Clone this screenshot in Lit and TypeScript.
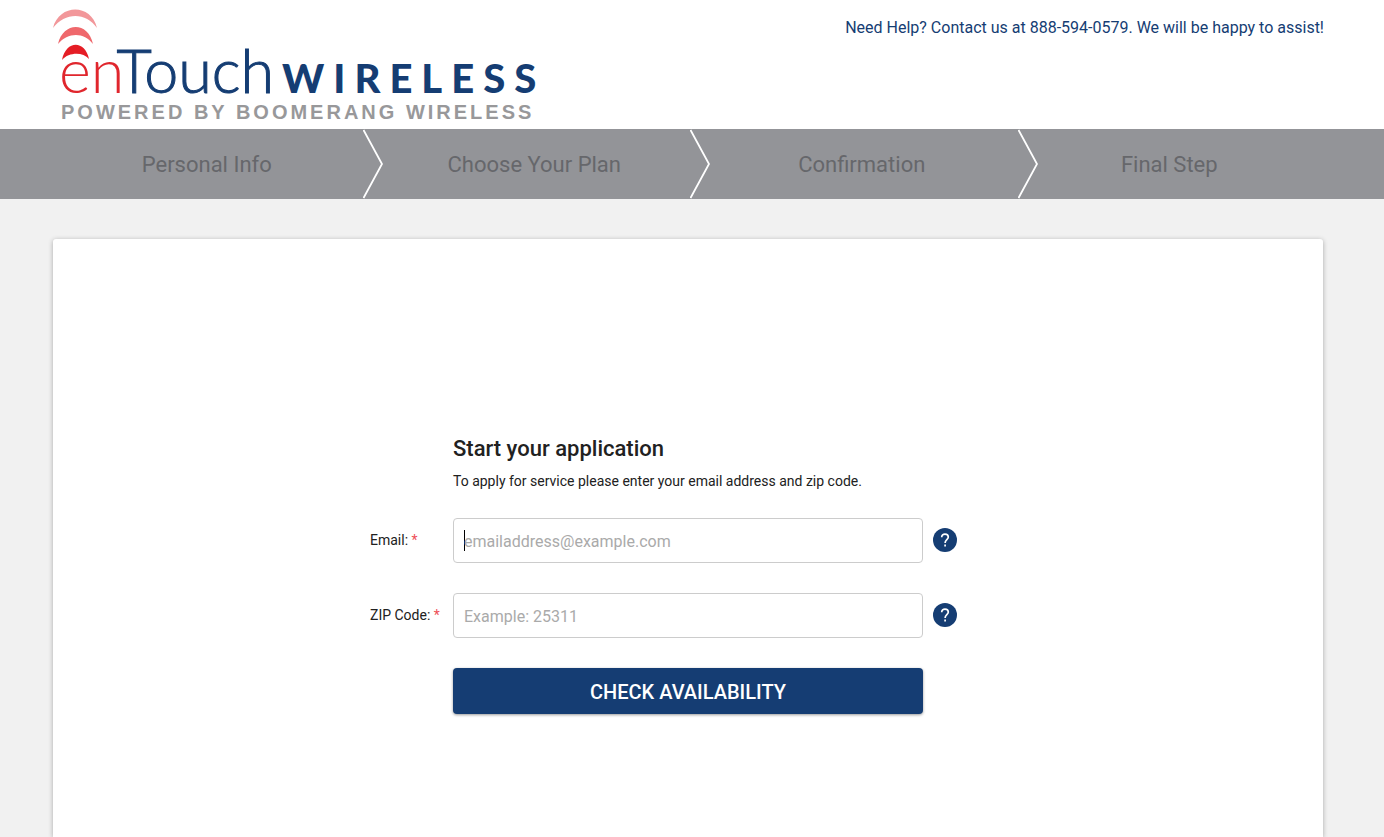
import { LitElement, html, css, svg } from "lit";
import { customElement } from "lit/decorators.js";

const STEPS = ["Personal Info", "Choose Your Plan", "Confirmation", "Final Step"];

@customElement("brand-logo")
class BrandLogo extends LitElement {
  static styles = css`
    :host { display: block; width: 510px; max-width: 100%; }
    svg { display: block; width: 100%; }
    .touch { font: 300 61px Lato, sans-serif; }
    .strong { stroke: #153d73; stroke-width: 1; }
    .wireless { font: 900 40px Lato, sans-serif; letter-spacing: 9px; }
    .powered { font: bold 20px "Liberation Sans", sans-serif; letter-spacing: 3px; }
  `;

  render() {
    return html`
      <svg viewBox="0 0 510 114" role="img" aria-label="enTouch Wireless">
        ${svg`
          <path d="M0 20 C6 -4 38 -5 44 20 C33 4 12 4 0 20Z" fill="#f2979a" />
          <path d="M5 36 C10 14 35 13 40 36 C31 24 15 24 5 36Z" fill="#ef686c" />
          <path d="M9 52 C13 32 32 32 36 51 C30 44 16 44 9 52Z" fill="#e51d25" />
          <text class="touch" x="6" y="85" fill="#e0262d">en<tspan class="strong" fill="#153d73">Touch</tspan></text>
          <text class="wireless" x="229" y="85" fill="#153d73">WIRELESS</text>
          <text class="powered" x="8" y="111" fill="#98989a">POWERED BY BOOMERANG WIRELESS</text>
        `}
      </svg>
    `;
  }
}

@customElement("app-root")
class AppRoot extends LitElement {
  static styles = css`
    :host {
      display: flex;
      flex-direction: column;
      min-height: 100vh;
      background: #f1f1f1;
      color: #212121;
      font: 14px/20px Roboto, sans-serif;
    }
    * { box-sizing: border-box; }
    .top {
      display: flex;
      justify-content: space-between;
      align-items: flex-start;
      height: 129px;
      padding: 8px 60px 0 53px;
      background: #fff;
    }
    .help-line { margin: 8px 0 0; font-size: 16px; line-height: 24px; color: #153d73; }
    .steps { padding: 0 61px 0 53px; background: #939498; }
    .steps ol { display: flex; margin: 0; padding: 0; list-style: none; }
    .step {
      display: flex;
      flex: 1 1 60px;
      align-items: center;
      height: 70px;
      font-size: 22px;
      line-height: 28px;
      color: #66676b;
    }
    .step:last-child { flex-basis: 20px; padding-right: 20px; }
    .step-name { flex: 1; padding-top: 2px; text-align: center; }
    .chevron { flex: none; width: 20px; height: 70px; margin-right: -2px; margin-left: 2px; }
    .main { display: flex; flex: 1; padding: 40px 61px 0 53px; }
    .card {
      flex: 1;
      padding-top: 196px;
      background: #fff;
      border-radius: 3px 3px 0 0;
      box-shadow: 0 1px 5px rgba(0, 0, 0, 0.3);
    }
    form {
      display: grid;
      grid-template-columns: 73px minmax(0, 470px) 73px;
      column-gap: 10px;
      justify-content: center;
      align-items: center;
    }
    .intro { grid-column: 2 / 4; margin-bottom: 27px; }
    h1 { margin: 0; font-size: 22px; line-height: 28px; font-weight: 500; }
    .intro p { margin: 8px 0 0; }
    label { white-space: nowrap; }
    .star { color: #ee4f57; }
    .field {
      width: 100%;
      height: 45px;
      margin-bottom: 30px;
      padding: 2px 10px 0;
      border: 1px solid #ccc;
      border-radius: 4px;
      background: #fff;
      color: #212121;
      font: 16px/20px Roboto, sans-serif;
      outline: none;
    }
    .field::placeholder { color: #aaa; opacity: 1; }
    .active:placeholder-shown {
      caret-color: transparent;
      background: linear-gradient(#000, #000) 10px 11px / 1px 21px no-repeat #fff;
    }
    .side { margin-bottom: 32px; }
    .hint {
      display: grid;
      place-items: center;
      width: 24px;
      height: 24px;
      padding: 0;
      border: 0;
      border-radius: 50%;
      background: #153d73;
    }
    .submit {
      grid-column: 2;
      height: 46px;
      border: 0;
      border-radius: 4px;
      background: #153d73;
      box-shadow: 0 1px 3px rgba(0, 0, 0, 0.4);
      color: #fff;
      font: 500 20px/24px Roboto, sans-serif;
      padding: 2px 0 0;
    }
  `;

  private hint(name: string) {
    return html`
      <button class="hint side" type="button" aria-label=${`Help with ${name}`}>
        <svg width="24" height="24" viewBox="0 0 24 24" fill="none" stroke="#fff" stroke-width="1.7">
          <path d="M8.7 9.2C8.7 7.2 10.1 6.1 12 6.1S15.3 7.2 15.3 9.1C15.3 11.7 12.1 11.8 12.1 15" />
          <path d="M12.1 16.6V18.4" />
        </svg>
      </button>
    `;
  }

  render() {
    return html`
      <header class="top">
        <brand-logo></brand-logo>
        <p class="help-line">Need Help? Contact us at 888-594-0579. We will be happy to assist!</p>
      </header>
      <nav class="steps" aria-label="Application steps">
        <ol>
          ${STEPS.map(
            (name, i) => html`
              <li class="step">
                <span class="step-name">${name}</span>
                ${i < STEPS.length - 1
                  ? html`<svg class="chevron" viewBox="0 0 20 70" fill="none" stroke="#fff" stroke-width="1.8" aria-hidden="true">
                      <path d="M0.5 1L19 35L0.5 69" />
                    </svg>`
                  : null}
              </li>
            `
          )}
        </ol>
      </nav>
      <main class="main">
        <section class="card">
          <form>
            <div class="intro">
              <h1>Start your application</h1>
              <p>To apply for service please enter your email address and zip code.</p>
            </div>
            <label class="side" for="email">Email: <span class="star">*</span></label>
            <input class="field active" id="email" type="email" placeholder="emailaddress@example.com" required />
            ${this.hint("email")}
            <label class="side" for="zip">ZIP Code: <span class="star">*</span></label>
            <input class="field" id="zip" type="text" inputmode="numeric" placeholder="Example: 25311" required />
            ${this.hint("ZIP code")}
            <button class="submit" type="button">CHECK AVAILABILITY</button>
          </form>
        </section>
      </main>
    `;
  }
}
